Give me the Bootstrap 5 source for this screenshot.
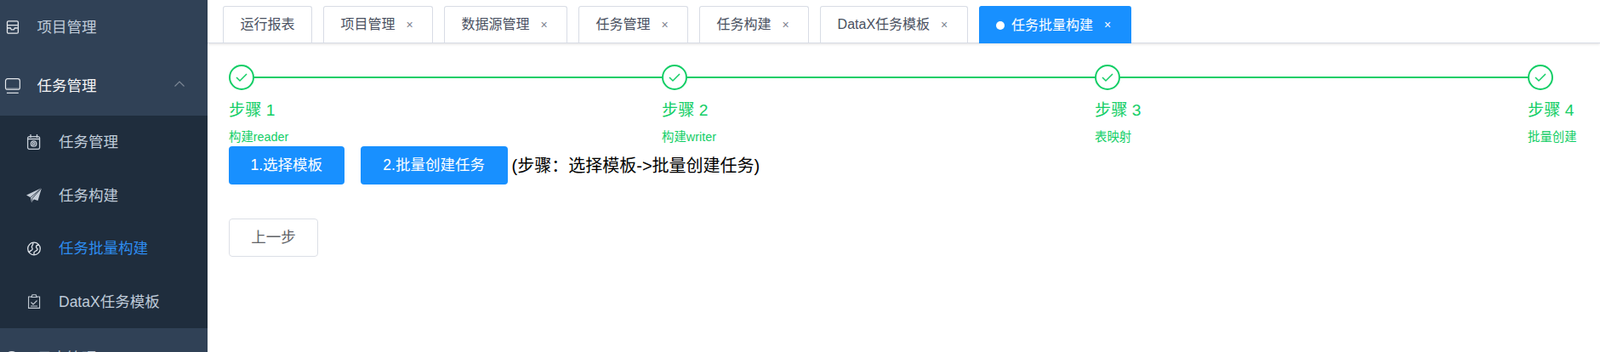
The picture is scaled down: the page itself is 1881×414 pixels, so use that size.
<!DOCTYPE html>
<html lang="zh-CN">
<head>
  <meta charset="UTF-8" />
  <title>任务批量构建</title>
  <link href="https://cdn.jsdelivr.net/npm/bootstrap@5.3.3/dist/css/bootstrap.min.css" rel="stylesheet" />
  <style>
    html, body { height: 414px; overflow: hidden; }
    body { font-family: "Liberation Sans", "Noto Sans CJK SC", sans-serif; font-size: 14px; color: #000; background: #fff; }
    .app-wrap { height: 414px; overflow: hidden; }

    .side-bar { width: 244px; flex: none; background: #304156; overflow: hidden; }
    .menu-top { height: 70px; color: #bfcbd9; font-size: 17.5px; }
    .menu-top.first-top { height: 64px; margin-bottom: 2px; }
    .menu-top.is-open { color: #f4f4f5; }
    .menu-top .top-ico { width: 43.5px; flex: none; color: #e6e9ed; }
    .menu-arrow { margin-left: auto; margin-right: 27px; margin-bottom: 6px; color: #7f8a98; }
    .sub-menu { background: #1f2d3d; height: 250px; }
    .sub-item { height: 62.5px; padding-left: 31px; color: #bfcbd9; font-size: 17.5px; }
    .sub-item .sub-ico { width: 38px; flex: none; color: #c6ced8; }
    .sub-item.is-active { color: #2d8cf0; }
    .sub-item.is-active .sub-ico { color: #dfe4ea; }

    .tag-bar { height: 51px; padding: 7px 0 0 18px; gap: 13px; border-bottom: 1px solid #d8dce5; box-shadow: 0 1px 3px rgba(0, 0, 0, .12); }
    .tag-item { height: 43px; padding: 0 19.5px; border: 1px solid #d8dce5; border-bottom: 0; border-radius: 3px 3px 0 0; color: #495060; font-size: 16px; background: #fff; }
    .tag-item .tag-x { margin-left: 10px; font-size: 14px; color: #7d8490; width: 14px; text-align: center; }
    .tag-item.is-current { background: #1890ff; border-color: #1890ff; color: #fff; height: 44px; }
    .tag-item.is-current .tag-x { color: #fff; }
    .tag-dot { width: 10px; height: 10px; border-radius: 50%; background: #fff; margin-right: 8px; }

    .step-area { padding: 25px 25px 0 25px; }
    .step-wrap { height: 96px; }
    .step-col { flex: 1 1 0; }
    .step-col.is-last { flex: none; width: 60px; }
    .step-head { height: 30px; }
    .step-circle { width: 30px; height: 30px; flex: none; border: 2px solid #13ce66; border-radius: 50%; color: #13ce66; }
    .step-line { flex: 1; height: 2px; background: #13ce66; }
    .step-title { font-size: 19.2px; line-height: 38px; color: #13ce66; margin-top: 5px; white-space: nowrap; }
    .step-desc { font-size: 14.4px; line-height: 20px; color: #13ce66; margin-top: 2px; white-space: nowrap; }

    .act-btn { height: 45px; padding: 0 25.5px; border: 0; border-radius: 4px; background: #1890ff; color: #fff; font-size: 17.5px; }
    .act-btn + .act-btn { margin-left: 19px; padding: 0 26.7px; }
    .act-hint { font-size: 20px; color: #000; margin-left: 5px; }
    .prev-btn { height: 45px; width: 105px; margin-top: 40px; border: 1px solid #dcdfe6; border-radius: 4px; background: #fff; color: #606266; font-size: 17.5px; }
  </style>
</head>
<body>
  <div class="app-wrap d-flex">
    <div class="side-bar">
      <div class="menu-top first-top d-flex align-items-center">
        <svg class="top-ico" width="44" height="16" viewBox="0 0 44 16" fill="none" stroke="currentColor" stroke-width="1.3"><rect x="8.6" y=".7" width="13" height="14.600" rx="1.500"/><path d="M9 5.500h12M9 9h3.500l1 2h3l1-2H21"/></svg>
        <span>项目管理</span>
      </div>
      <div class="menu-top is-open d-flex align-items-center">
        <svg class="top-ico" width="44" height="18" viewBox="0 0 44 18" fill="none" stroke="currentColor" stroke-width="1.2"><rect x="6.600" y=".6" width="17" height="12.800" rx="2.500"/><path d="M8 12.500h14" stroke-width="2" stroke="#8a94a1"/><path d="M8 17.400h14"/></svg>
        <span>任务管理</span>
        <svg class="menu-arrow" width="12" height="7" viewBox="0 0 12 7" fill="none" stroke="currentColor" stroke-width="1.1"><path d="M.5 6.500 6 1l5.500 5.500"/></svg>
      </div>
      <div class="sub-menu">
        <div class="sub-item d-flex align-items-center">
          <svg class="sub-ico" width="38" height="18" viewBox="0 0 38 18" fill="none" stroke="currentColor" stroke-width="1.300"><rect x="1.600" y="2.600" width="14" height="14.800" rx="2"/><path d="M5 0v4M12.500 0v4M2 5.500h13"/><circle cx="8.600" cy="11" r="3.200"/><circle cx="8.600" cy="11" r="1.300"/></svg>
          <span>任务管理</span>
        </div>
        <div class="sub-item d-flex align-items-center">
          <svg class="sub-ico" width="38" height="17" viewBox="0 0 38 17" fill="currentColor"><path d="M18 0 0 8.500l5 2.700L6 17l3-3.600 4.500 1.600z"/><path d="M5 11.200 18 0 6.800 12.500V16" fill="none" stroke="#1f2d3d" stroke-width=".8"/></svg>
          <span>任务构建</span>
        </div>
        <div class="sub-item is-active d-flex align-items-center">
          <svg class="sub-ico" width="38" height="17" viewBox="0 0 38 17" fill="none" stroke="currentColor" stroke-width="1.300"><circle cx="9" cy="8.500" r="7.300"/><path d="M3 13c1-2 3-2 4-3.500S5.500 7 6.500 5.500 8 3.500 8 1.500M15 4c-2 0-3.500 1-3.500 2.500s2 1.500 1.500 3-3.500 2-4 3.500 0 2 .5 2.500"/></svg>
          <span>任务批量构建</span>
        </div>
        <div class="sub-item d-flex align-items-center">
          <svg class="sub-ico" width="38" height="17" viewBox="0 0 38 17" fill="none" stroke="currentColor" stroke-width="1.100"><path d="M6 3H2.600v13.400h13V3H12.200M6 3.500 7 .7h4.200l1 2.800zM5.500 9.500 8 12l4.500-4.500M5 14h8"/></svg>
          <span>DataX任务模板</span>
        </div>
      </div>
      <div class="menu-top d-flex align-items-center">
        <svg class="top-ico" width="44" height="18" viewBox="0 0 44 18" fill="none" stroke="currentColor" stroke-width="1.400"><circle cx="14" cy="9" r="7.500"/></svg>
        <span>日志管理</span>
      </div>
    </div>

    <div class="flex-grow-1 d-flex flex-column">
      <div class="tag-bar d-flex flex-none">
        <div class="tag-item d-flex align-items-center">运行报表</div>
        <div class="tag-item d-flex align-items-center">项目管理<span class="tag-x">×</span></div>
        <div class="tag-item d-flex align-items-center">数据源管理<span class="tag-x">×</span></div>
        <div class="tag-item d-flex align-items-center">任务管理<span class="tag-x">×</span></div>
        <div class="tag-item d-flex align-items-center">任务构建<span class="tag-x">×</span></div>
        <div class="tag-item d-flex align-items-center">DataX任务模板<span class="tag-x">×</span></div>
        <div class="tag-item is-current d-flex align-items-center"><span class="tag-dot"></span>任务批量构建<span class="tag-x">×</span></div>
      </div>

      <div class="step-area">
        <div class="step-wrap d-flex">
          <div class="step-col">
            <div class="step-head d-flex align-items-center">
              <div class="step-circle d-flex align-items-center justify-content-center"><svg width="16" height="12" viewBox="0 0 16 12" fill="none" stroke="currentColor" stroke-width="1.500"><path d="M2 6l4 4 8-8"/></svg></div>
              <div class="step-line"></div>
            </div>
            <div class="step-title">步骤 1</div>
            <div class="step-desc">构建reader</div>
          </div>
          <div class="step-col">
            <div class="step-head d-flex align-items-center">
              <div class="step-circle d-flex align-items-center justify-content-center"><svg width="16" height="12" viewBox="0 0 16 12" fill="none" stroke="currentColor" stroke-width="1.500"><path d="M2 6l4 4 8-8"/></svg></div>
              <div class="step-line"></div>
            </div>
            <div class="step-title">步骤 2</div>
            <div class="step-desc">构建writer</div>
          </div>
          <div class="step-col">
            <div class="step-head d-flex align-items-center">
              <div class="step-circle d-flex align-items-center justify-content-center"><svg width="16" height="12" viewBox="0 0 16 12" fill="none" stroke="currentColor" stroke-width="1.500"><path d="M2 6l4 4 8-8"/></svg></div>
              <div class="step-line"></div>
            </div>
            <div class="step-title">步骤 3</div>
            <div class="step-desc">表映射</div>
          </div>
          <div class="step-col is-last">
            <div class="step-head d-flex align-items-center">
              <div class="step-circle d-flex align-items-center justify-content-center"><svg width="16" height="12" viewBox="0 0 16 12" fill="none" stroke="currentColor" stroke-width="1.500"><path d="M2 6l4 4 8-8"/></svg></div>
            </div>
            <div class="step-title">步骤 4</div>
            <div class="step-desc">批量创建</div>
          </div>
        </div>

        <div class="d-flex align-items-center">
          <button type="button" class="act-btn">1.选择模板</button>
          <button type="button" class="act-btn">2.批量创建任务</button>
          <span class="act-hint">(步骤：选择模板->批量创建任务)</span>
        </div>
        <button type="button" class="prev-btn d-block">上一步</button>
      </div>
    </div>
  </div>
  <script src="https://cdn.jsdelivr.net/npm/bootstrap@5.3.3/dist/js/bootstrap.bundle.min.js"></script>
</body>
</html>
